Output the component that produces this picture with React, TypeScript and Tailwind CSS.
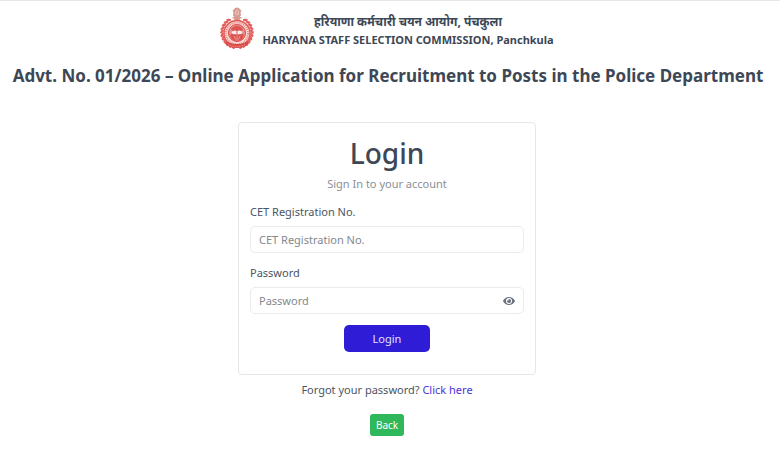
import React, { useState } from 'react';
import { FaEye, FaEyeSlash } from 'react-icons/fa';

// Leaf positions for the wreath round the emblem, in degrees from the top
const wreathAngles = [34, 47, 60, 73, 86, 99, 112, 125, 138, 151, 164];

const Emblem = () => (
  <svg className="h-[42px] w-[34px] shrink-0" viewBox="0 0 68 84" role="img" aria-label="Haryana emblem">
    {/* Lion capital */}
    <g fill="#d79a92">
      <path d="M28 5q1-4 6-4t6 4l3 2-2 4 1 6-3 3H29l-3-3 1-6-2-4z" />
      <path d="M25 20h18v3H25zM28 23h12l-1 4H29z" />
    </g>
    <path d="M31 7v9M34 3v14M37 7v9" stroke="#f3dcd8" strokeWidth="1" />
    {/* Wreath */}
    <g fill="#e2615e">
      {wreathAngles.map((a) => (
        <React.Fragment key={a}>
          <ellipse cx="34" cy="21" rx="2.500" ry="5" transform={`rotate(${a} 34 51) rotate(55 34 21)`} />
          <ellipse cx="34" cy="21" rx="2.500" ry="5" transform={`rotate(${-a} 34 51) rotate(-55 34 21)`} />
        </React.Fragment>
      ))}
    </g>
    {/* Rings */}
    <circle cx="34" cy="53" r="26" fill="#f9d9d6" stroke="#e05a57" strokeWidth="3" />
    <circle cx="34" cy="53" r="22" fill="none" stroke="#e88784" strokeWidth="4" strokeDasharray="2 2" />
    <circle cx="34" cy="52" r="17" fill="#e9918e" stroke="#d94b48" strokeWidth="2" />
    {/* Sun over the lotus */}
    <path d="M22 45q3-7 12-7t12 7l-4 3H26z" fill="#dc5552" />
    <path d="M23 50q5-5 11-2 6-3 11 2l-3 4H26z" fill="#fdeeec" />
    <path d="M34 47v8" stroke="#dc5552" strokeWidth="2" />
    <path d="M20 55q7-2 14 2 7-4 14-2-2 9-8 12H28q-6-3-8-12z" fill="#dc4f4c" />
    <path d="M34 58v8M28 58l3 7M40 58l-3 7" fill="none" stroke="#f3b5b1" strokeWidth="1.500" />
    <path d="M13 68q8 6 21 6t21-6l3 5q-9 9-24 9T10 73z" fill="#d94b48" />
    <path d="M17 75q8 4 17 4t17-4" fill="none" stroke="#f3b5b1" strokeWidth="1.500" strokeDasharray="2 1.500" />
  </svg>
);

const App = () => {
  const [showPassword, setShowPassword] = useState(false);

  return (
    <div className="min-h-screen bg-white font-['Noto_Sans','Open_Sans',sans-serif] text-[11px] text-[#4b5563]">
      <header className="border-t border-gray-200 pt-[6px] text-center font-bold text-[#3d4756]">
        <div className="flex items-center justify-center gap-2 pr-[6px]">
          <Emblem />
          <div className="pt-[6px] text-[11px] leading-[18px]">
            <p className="text-xs leading-[18px]">हरियाणा कर्मचारी चयन आयोग, पंचकुला</p>
            <p>HARYANA STAFF SELECTION COMMISSION, Panchkula</p>
          </div>
        </div>
        <h1 className="mt-3 px-1 pr-2 text-[17px] leading-[30px]">
          Advt. No. 01/2026 – Online Application for Recruitment to Posts in the Police Department
        </h1>
      </header>

      <main className="flex flex-col items-center px-3 pt-[31px] pr-[18px]">
        <form
          className="w-full max-w-[298px] rounded border border-[#e5e7eb] px-[11px] pt-3 pb-[22px]"
          onSubmit={(e) => e.preventDefault()}
        >
          <h2 className="text-center text-[28px] leading-9 font-medium text-[#3d4756]">Login</h2>
          <p className="mt-1 text-center leading-[18px] text-[#8a8f96]">Sign In to your account</p>

          <label htmlFor="regNo" className="mt-[10px] block leading-[18px]">CET Registration No.</label>
          <input
            id="regNo"
            type="text"
            placeholder="CET Registration No."
            className="mt-[5px] h-[27px] w-full rounded-[5px] border border-[#e9ebee] px-2 placeholder:text-[#83888f]"
          />

          <label htmlFor="password" className="mt-[11px] block leading-[18px]">Password</label>
          <div className="mt-[5px] flex h-[27px] items-center rounded-[5px] border border-[#e9ebee] px-2 pt-px">
            <input
              id="password"
              type={showPassword ? 'text' : 'password'}
              placeholder="Password"
              className="min-w-0 flex-1 outline-none placeholder:text-[#83888f]"
            />
            <button
              type="button"
              aria-label="Show password"
              className="text-xs text-[#6b7280]"
              onClick={() => setShowPassword(!showPassword)}
            >
              {showPassword ? <FaEyeSlash /> : <FaEye />}
            </button>
          </div>

          <button type="submit" className="mx-auto mt-[11px] block h-[27px] w-[86px] rounded-[5px] bg-[#2f1cd6] pt-px text-[#e3e0fa]">
            Login
          </button>
        </form>

        <p className="mt-[6px] leading-[18px]">
          Forgot your password? <a href="#forgot" className="text-[#4a33d8]">Click here</a>
        </p>
        <button type="button" className="mt-[15px] h-[22px] rounded-[3px] bg-[#2fb75b] px-[6px] text-[10px] text-white">
          Back
        </button>
      </main>
    </div>
  );
};

export default App;
